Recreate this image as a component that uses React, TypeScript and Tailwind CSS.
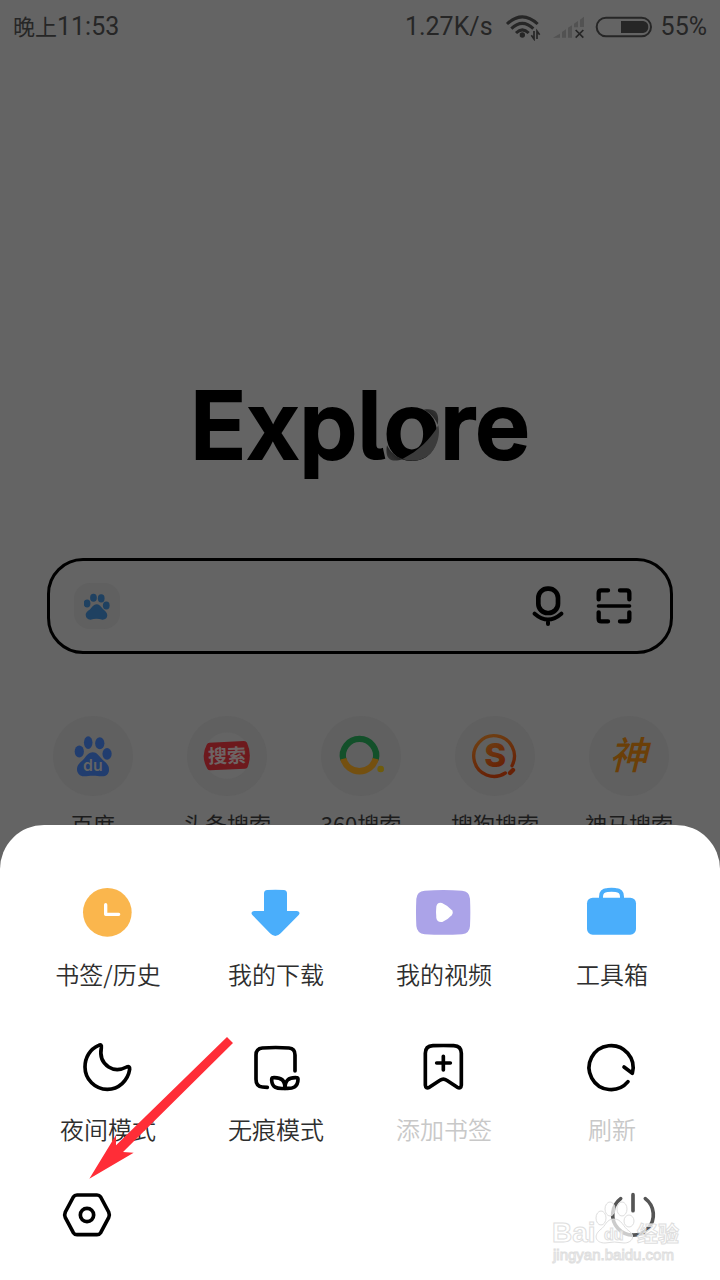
import type { ReactNode } from "react";

const shortcuts: { name: string; icon: ReactNode }[] = [
  { name: "百度", icon: <BaiduIcon /> },
  { name: "头条搜索", icon: <ToutiaoIcon /> },
  { name: "360搜索", icon: <So360Icon /> },
  { name: "搜狗搜索", icon: <SogouIcon /> },
  { name: "神马搜索", icon: <ShenmaIcon /> },
];

const menuItems: { name: string; icon: ReactNode; disabled?: boolean }[] = [
  { name: "书签/历史", icon: <HistoryIcon /> },
  { name: "我的下载", icon: <DownloadIcon /> },
  { name: "我的视频", icon: <VideoIcon /> },
  { name: "工具箱", icon: <ToolboxIcon /> },
  { name: "夜间模式", icon: <MoonIcon /> },
  { name: "无痕模式", icon: <IncognitoIcon /> },
  { name: "添加书签", icon: <BookmarkIcon />, disabled: true },
  { name: "刷新", icon: <RefreshIcon />, disabled: true },
];

function BaiduIcon() {
  return (
    <svg viewBox="98 104 124 128" className="h-[43px] w-[41px]" fill="#213d6f">
      <ellipse cx="117" cy="153" rx="14" ry="18" />
      <ellipse cx="144" cy="126" rx="13" ry="19" />
      <ellipse cx="179" cy="128" rx="14" ry="18" />
      <ellipse cx="201" cy="160" rx="14" ry="18" />
      <path d="M158 155C170 155 177 166 184 174C193 184 207 191 207 207C207 221 198 228 186 228C175 228 169 226 158 226C147 226 141 228 131 228C119 228 110 220 110 206C110 191 124 184 132 174C139 165 146 155 158 155Z" />
      <text
        x="158"
        y="213"
        textAnchor="middle"
        fontSize="48"
        fill="#646464"
        className="font-['Inter',sans-serif] font-semibold"
      >
        du
      </text>
    </svg>
  );
}

function ToutiaoIcon() {
  return (
    <svg viewBox="486 94 150 150" className="size-[50px]">
      <circle cx="561" cy="168" r="70" fill="#646464" />
      <path
        d="M508 129L612 124Q618 124 621 129Q637 164 623 202Q621 207 615 207L510 212Q505 212 502 207Q481 171 500 135Q503 129 508 129Z"
        fill="#6d191d"
      />
      <text
        x="561"
        y="189"
        textAnchor="middle"
        fontSize="57"
        fill="#6e6464"
        transform="rotate(-2 561 168)"
        className="font-['Noto_Sans_CJK_SC',sans-serif] font-bold"
      >
        搜索
      </text>
    </svg>
  );
}

function So360Icon() {
  return (
    <svg viewBox="886 96 150 150" className="size-[50px]" fill="none">
      <path d="M908 182A50 50 0 1 1 1005 182" stroke="#13502a" strokeWidth="19" />
      <path d="M908 179A50 50 0 0 0 1005 179" stroke="#745010" strokeWidth="19" />
      <circle cx="1020" cy="210" r="10" fill="#6f5c0c" />
    </svg>
  );
}

function SogouIcon() {
  return (
    <svg viewBox="270 96 150 150" className="size-[50px]" fill="none">
      <defs>
        <linearGradient id="sogou" x1="0" y1="0" x2="0.4" y2="1">
          <stop offset="0" stopColor="#6f4214" />
          <stop offset="1" stopColor="#672106" />
        </linearGradient>
      </defs>
      <path
        d="M376 222A61 61 0 1 1 396 200"
        stroke="url(#sogou)"
        strokeWidth="10"
        strokeLinecap="round"
      />
      <path d="M390 222L399 213" stroke="#672106" strokeWidth="13" strokeLinecap="round" />
      <text
        x="346"
        y="204"
        textAnchor="middle"
        fontSize="100"
        fill="url(#sogou)"
        className="font-['Inter',sans-serif] font-extrabold"
      >
        S
      </text>
    </svg>
  );
}

function ShenmaIcon() {
  return (
    <svg viewBox="672 93 150 150" className="size-[50px] overflow-visible">
      <text
        x="745"
        y="208"
        textAnchor="middle"
        fontSize="114"
        fill="#6b3f08"
        className="font-['Noto_Sans_CJK_SC',sans-serif] font-medium italic"
      >
        神
      </text>
    </svg>
  );
}

function HistoryIcon() {
  return (
    <svg viewBox="120 42 168 168" className="size-14">
      <circle cx="202" cy="127" r="73" fill="#fab64d" />
      <path
        d="M197 104V133H236"
        fill="none"
        stroke="#fff"
        strokeWidth="10"
        strokeLinecap="round"
        strokeLinejoin="round"
      />
    </svg>
  );
}

function DownloadIcon() {
  return (
    <svg viewBox="624 42 168 168" className="size-14">
      <path
        d="M682 60Q706 59 731 60Q741 61 741 70V123H771Q783 125 776 135L722 190Q706 206 690 190L637 135Q630 125 642 123H672V70Q672 61 682 60Z"
        fill="#4aaefb"
      />
    </svg>
  );
}

function VideoIcon() {
  return (
    <svg viewBox="108 42 168 168" className="size-14">
      <path
        d="M134 62Q190 58 246 62Q268 63 270 86Q272 127 270 168Q269 190 246 193Q190 196 134 193Q111 190 109 168Q107 127 109 86Q111 63 134 62Z"
        fill="#aba3e8"
      />
      <path
        d="M169 110Q171 96 186 99Q204 107 216 121Q221 128 215 136Q204 149 187 156Q171 158 169 144Q167 127 169 110Z"
        fill="#fff"
      />
    </svg>
  );
}

function ToolboxIcon() {
  return (
    <svg viewBox="612 42 168 168" className="size-14">
      <rect x="621" y="83" width="147" height="111" rx="17" fill="#4aaefb" />
      <path
        d="M663 90V80Q663 61 682 60Q695 59 707 60Q726 61 726 80V90"
        fill="none"
        stroke="#4aaefb"
        strokeWidth="12"
      />
    </svg>
  );
}

function LineIcon({ viewBox, children }: { viewBox: string; children: ReactNode }) {
  return (
    <svg
      viewBox={viewBox}
      className="size-14"
      fill="none"
      stroke="currentColor"
      strokeWidth="11"
      strokeLinecap="round"
      strokeLinejoin="round"
    >
      {children}
    </svg>
  );
}

function MoonIcon() {
  return (
    <LineIcon viewBox="150 57 168 168">
      <path d="M206 76C180 87 165 112 165 141A67 67 0 0 0 232 208C266 208 294 182 299 148Q300 137 290 141C271 151 250 150 236 141C216 128 209 109 214 83Q216 71 206 76Z" />
    </LineIcon>
  );
}

function IncognitoIcon() {
  return (
    <LineIcon viewBox="654 57 168 168">
      <path d="M795 153V105Q795 85 777 84Q737 81 697 84Q678 86 678 105V178Q678 200 697 201L712 202" />
      <path d="M730 173C754 172 765 180 765 205C738 207 726 202 725 180Q725 173 730 173Z" />
      <path d="M799 173C775 172 765 182 765 205C789 207 804 201 804 178Q804 173 799 173Z" />
    </LineIcon>
  );
}

function BookmarkIcon() {
  return (
    <LineIcon viewBox="108 57 168 168">
      <path d="M136 100Q136 78 159 77Q190 76 221 77Q244 78 244 100V195Q243 207 232 202L200 181Q190 174 180 181L148 202Q137 207 136 195Z" />
      <path d="M170 129H211M190 109V150" />
    </LineIcon>
  );
}

function RefreshIcon() {
  return (
    <LineIcon viewBox="612 57 168 168">
      <path d="M744 185A66 66 0 1 1 757 160L732 141" />
    </LineIcon>
  );
}

function SettingsIcon() {
  return (
    <LineIcon viewBox="87 501 168 168">
      <path d="M141 525H201Q208 525 212 531L236 576Q240 585 236 593L212 638Q208 644 201 644H141Q134 644 130 638L106 593Q102 585 106 576L130 531Q134 525 141 525Z" />
      <circle cx="171" cy="585" r="20" />
    </LineIcon>
  );
}

function PowerIcon() {
  return (
    <LineIcon viewBox="225 51 168 168">
      <path d="M272 86A61 61 0 1 0 346 86M309 74V122" />
    </LineIcon>
  );
}

function StatusBar() {
  return (
    <header className="flex h-[54px] items-center px-[13px] font-['Roboto','Noto_Sans_CJK_SC',sans-serif] text-[25px] text-[#262626]">
      <span>
        <span className="text-[22px]">晚上</span>11:53
      </span>
      <span className="ml-auto">1.27K/s</span>
      <svg viewBox="345 36 111 81" className="ml-3 h-[27px] w-[37px]" fill="none" stroke="#262626">
        <g strokeWidth="9">
          <path d="M351 66Q397 23 443 66" />
          <path d="M364 80Q397 48 430 80" />
          <path d="M378 93Q397 74 416 93" />
        </g>
        <circle cx="397" cy="99" r="8" fill="#262626" stroke="none" />
        <path d="M432 87V111L424 100M441 111V87L449 98" strokeWidth="5" />
      </svg>
      <svg viewBox="486 39 99 72" className="ml-[10px] h-6 w-[33px]">
        <path
          d="M489 107L510 95V107ZM516 90L528 82V107H516ZM534 77L546 70V107H534ZM552 65L564 57V76H552ZM570 53L582 44V75H570Z"
          fill="#525252"
        />
        <path d="M557 84L580 107M580 84L557 107" stroke="#262626" strokeWidth="5" />
      </svg>
      <svg viewBox="615 42 174 66" className="ml-[10px] h-[22px] w-[58px]">
        <rect x="620" y="47" width="163" height="56" rx="28" fill="none" stroke="#262626" strokeWidth="6" />
        <path d="M693 57H760Q775 60 775 75Q775 90 760 93H693Z" fill="#262626" />
      </svg>
      <span className="ml-2">55%</span>
    </header>
  );
}

function Wordmark() {
  return (
    <h1 className="mt-[315px] text-center font-['Inter',sans-serif] text-[93px] leading-[112px] font-semibold text-black [-webkit-text-stroke:2px_black] [font-feature-settings:'cv05']">
      Expl
      <span className="relative">
        o
        {/* planet shading around the letter */}
        <svg
          viewBox="636 110 168 168"
          className="absolute bottom-[18px] left-[2px] size-14"
          aria-hidden="true"
        >
          <defs>
            <linearGradient id="orbit" x1="1" y1="0" x2="0" y2="1">
              <stop offset="0" stopColor="#3a3a3a" />
              <stop offset="0.25" stopColor="#161616" />
              <stop offset="0.75" stopColor="#161616" />
              <stop offset="1" stopColor="#3a3a3a" />
            </linearGradient>
          </defs>
          <path d="M796 165C802 192 794 226 774 248C752 272 716 276 688 266C735 243 773 207 796 165Z" fill="#3b3b3b" />
          <path
            d="M752 118C789 112 800 128 794 163C788 146 774 128 752 118ZM642 225C635 262 650 280 690 266C668 260 652 245 642 225Z"
            fill="url(#orbit)"
          />
        </svg>
      </span>
      re
    </h1>
  );
}

function SearchBox() {
  return (
    <form className="mx-[47px] mt-[77px] flex h-24 items-center rounded-[36px] border-[3px] border-black pr-9 pl-6 text-black">
      <button
        type="button"
        aria-label="选择搜索引擎"
        className="flex size-[46px] items-center justify-center rounded-2xl bg-[#606060]"
      >
        <svg viewBox="162 158 80 80" className="size-[27px]" fill="#1f4161">
          <ellipse cx="171" cy="189" rx="10" ry="12" />
          <ellipse cx="190" cy="172" rx="10" ry="12" />
          <ellipse cx="213" cy="174" rx="10" ry="12" />
          <ellipse cx="228" cy="195" rx="10" ry="12" />
          <path d="M199 191C207 191 211 197 216 203C221 209 231 214 231 224Q230 237 217 237Q199 232 181 237Q168 236 167 223C167 214 177 210 182 204C187 198 191 191 199 191Z" />
        </svg>
      </button>
      <input type="search" aria-label="搜索" className="min-w-0 flex-1 bg-transparent px-4 outline-none" />
      <button type="button" aria-label="语音搜索">
        <svg viewBox="84 108 120 120" className="size-10" fill="none" stroke="currentColor" strokeLinecap="round">
          <rect x="115" y="116" width="59" height="73" rx="28" strokeWidth="14" />
          <path d="M104 191Q144 226 184 191M144 214V222" strokeWidth="12" />
        </svg>
      </button>
      <button type="button" aria-label="扫一扫" className="ml-[26px]">
        <svg
          viewBox="282 107 120 120"
          className="size-10"
          fill="none"
          stroke="currentColor"
          strokeWidth="13"
          strokeLinecap="round"
        >
          <path d="M296 147V128Q296 120 304 120H324M360 120H380Q388 120 388 128V147M388 186V205Q388 213 380 213H360M324 213H304Q296 213 296 205V186" />
          <path d="M295 167H389" strokeWidth="10" />
        </svg>
      </button>
    </form>
  );
}

function Shortcuts() {
  return (
    <nav className="mt-[62px] grid grid-cols-5 pr-6 pl-[26px]">
      {shortcuts.map((item) => (
        <a key={item.name} href="#" className="flex flex-col items-center gap-[11px] text-[#1c1c1c]">
          <span className="flex size-20 items-center justify-center rounded-full bg-[#606060]">
            {item.icon}
          </span>
          <span className="text-[22px] leading-8">{item.name}</span>
        </a>
      ))}
    </nav>
  );
}

function Watermark() {
  return (
    <svg
      viewBox="0 0 136 70"
      className="pointer-events-none absolute right-[34px] bottom-[12px] h-[70px] w-[136px] font-['Liberation_Sans','Noto_Sans_CJK_SC',sans-serif] font-bold"
      fill="#fff"
      fillOpacity="0.7"
      stroke="#dedede"
      strokeWidth="1"
    >
      <ellipse cx="51" cy="20" rx="5" ry="7" />
      <ellipse cx="60" cy="11" rx="5" ry="7" />
      <ellipse cx="72" cy="11" rx="5" ry="7" />
      <ellipse cx="79" cy="23" rx="5" ry="6" />
      <path d="M64 21C72 21 73 29 79 33C86 38 82 45 74 45Q64 43 55 45C46 45 43 38 50 32C56 28 56 21 64 21Z" />
      <text x="2" y="44" fontSize="28">
        Bai
      </text>
      <text x="54" y="42" fontSize="16">
        du
      </text>
      <text x="87" y="43" fontSize="21">
        经验
      </text>
      <text x="3" y="62" fontSize="15" className="font-normal">
        jingyan.baidu.com
      </text>
    </svg>
  );
}

function MenuSheet() {
  return (
    <section className="absolute inset-x-0 bottom-0 rounded-t-[44px] bg-white pt-[59px] pb-[37px] text-black">
      <div className="grid grid-cols-4 gap-y-[49px] px-6">
        {menuItems.map((item) => (
          <button
            key={item.name}
            type="button"
            disabled={item.disabled}
            className="group flex flex-col items-center gap-[18px]"
          >
            {item.icon}
            <span className="text-2xl leading-8 font-[350] text-[#2e2e2e] group-disabled:text-[#c8c8c8]">
              {item.name}
            </span>
          </button>
        ))}
      </div>
      <div className="mt-[42px] flex justify-between px-[59px]">
        <button type="button" aria-label="设置">
          <SettingsIcon />
        </button>
        <button type="button" aria-label="退出" className="text-[#555]">
          <PowerIcon />
        </button>
      </div>
      <svg
        viewBox="177 51 432 426"
        className="pointer-events-none absolute top-[212px] left-[89px] h-[142px] w-36"
        aria-hidden="true"
      >
        <path d="M591 51L609 69L279 396L311 398L178 476L258 345V376Z" fill="#ff2d37" />
      </svg>
      <Watermark />
    </section>
  );
}

export default function App() {
  return (
    <main className="relative min-h-screen overflow-hidden bg-[#646464] font-['Noto_Sans_CJK_SC',sans-serif]">
      <StatusBar />
      <Wordmark />
      <SearchBox />
      <Shortcuts />
      <MenuSheet />
    </main>
  );
}
